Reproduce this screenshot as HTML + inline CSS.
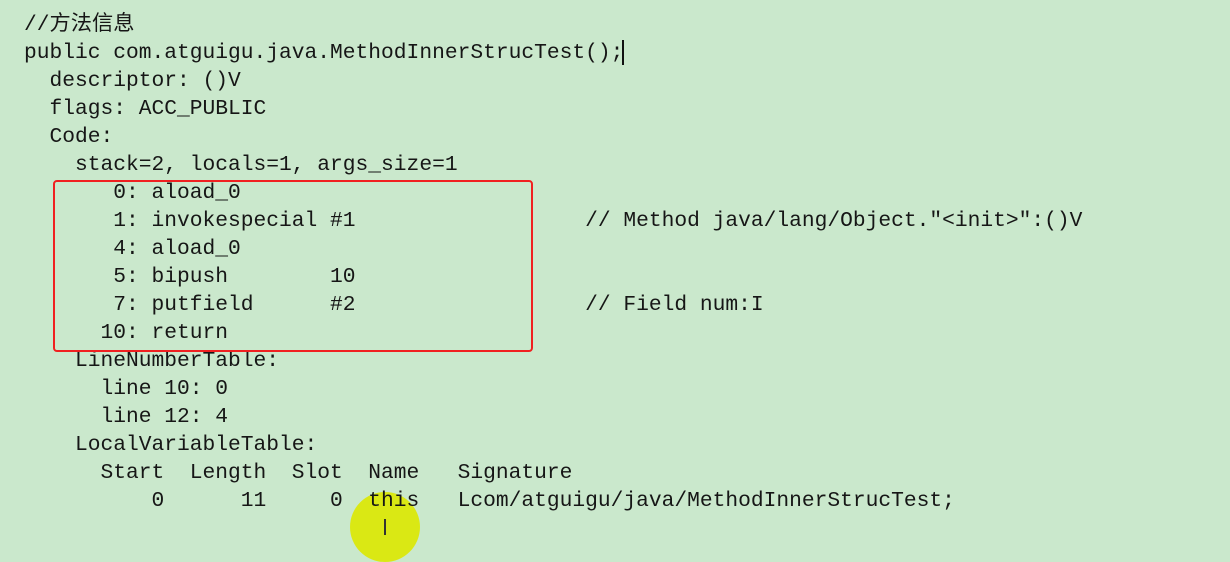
<!DOCTYPE html>
<html><head><meta charset="utf-8"><style>
html,body{margin:0;padding:0;}
body{width:1230px;height:537px;background:#cae8cc;overflow:hidden;position:relative;}
pre{position:absolute;left:24px;top:11px;margin:0;font-family:"Liberation Mono","Noto Sans CJK SC",monospace;font-size:21.25px;line-height:28px;color:#161616;}
.box{position:absolute;left:53px;top:180px;width:476px;height:168px;border:2.5px solid #f02020;border-radius:4px;}
.dot{position:absolute;left:350px;top:492px;width:70px;height:70px;border-radius:50%;background:#dce800;opacity:.9;}
.cur{position:absolute;left:622px;top:40px;width:2px;height:25px;background:#111;}
.ib{position:absolute;left:384px;top:519px;width:2px;height:16px;background:#333;}
</style></head><body>
<div class="dot"></div>
<pre>//方法信息
public com.atguigu.java.MethodInnerStrucTest();
  descriptor: ()V
  flags: ACC_PUBLIC
  Code:
    stack=2, locals=1, args_size=1
       0: aload_0
       1: invokespecial #1                  // Method java/lang/Object."&lt;init&gt;":()V
       4: aload_0
       5: bipush        10
       7: putfield      #2                  // Field num:I
      10: return
    LineNumberTable:
      line 10: 0
      line 12: 4
    LocalVariableTable:
      Start  Length  Slot  Name   Signature
          0      11     0  this   Lcom/atguigu/java/MethodInnerStrucTest;</pre>
<div class="box"></div>
<div class="cur"></div>
<div class="ib"></div>
</body></html>
